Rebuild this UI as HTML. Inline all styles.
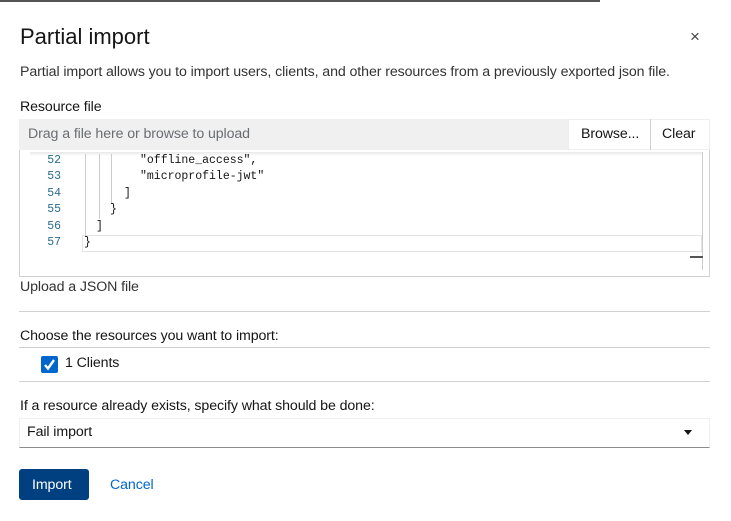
<!DOCTYPE html>
<html><head><style>
*{margin:0;padding:0;box-sizing:border-box}
body{width:731px;height:521px;background:#fff;font-family:"Liberation Sans",sans-serif;color:#151515;position:relative;overflow:hidden}
.a{position:absolute;white-space:nowrap}
.t{font-size:14.2px;letter-spacing:-0.1px}
.code{font-family:"Liberation Mono",monospace;font-size:11.5px;color:#151515}
.ln{font-family:"Liberation Mono",monospace;font-size:11.5px;color:#2a6e8f;width:30px;text-align:right;left:31px}
.hr{position:absolute;left:19px;width:691px;height:1px;background:#d2d2d2}
</style></head><body>
<div class="a" style="left:0;top:0;width:600px;height:2px;background:#555"></div>
<div class="a" style="left:20px;top:24px;font-size:22px">Partial import</div>
<div class="a" style="left:690px;top:27px;font-size:17px;color:#444">×</div>
<div class="a t" style="left:20px;top:64px;color:#333">Partial import allows you to import users, clients, and other resources from a previously exported json file.</div>
<div class="a t" style="left:20px;top:99px">Resource file</div>
<div class="a" style="left:19px;top:119px;width:691px;height:31px;background:#f0f0f0"></div>
<div class="a t" style="left:28px;top:126px;color:#6a6e73">Drag a file here or browse to upload</div>
<div class="a" style="left:568px;top:119px;width:142px;height:31px;background:#fff;border:1px solid #eee"></div>
<div class="a" style="left:650px;top:119px;width:1px;height:31px;background:#d2d2d2"></div>
<div class="a t" style="left:581px;top:126px">Browse...</div>
<div class="a t" style="left:662px;top:126px">Clear</div>
<div class="a" style="left:19px;top:150px;width:691px;height:127px;border:1px solid #d2d2d2;border-top:none"></div>
<div class="a" style="left:30px;top:152px;width:672px;height:4px;background:linear-gradient(#e8e8e8,#fff)"></div>
<div class="a" style="left:82px;top:235px;width:620px;height:17px;border:1px solid #e4e4e4"></div>
<div class="a" style="left:702px;top:152px;width:1px;height:118px;background:#ccc"></div>
<div class="a" style="left:690px;top:256px;width:13px;height:2px;background:#555"></div>
<div class="a" style="left:85px;top:154px;width:1px;height:82px;background:#ccc"></div>
<div class="a" style="left:99px;top:154px;width:1px;height:65px;background:#ccc"></div>
<div class="a" style="left:111px;top:154px;width:1px;height:49px;background:#ccc"></div>
<div class="a ln" style="top:154px">52</div><div class="a code" style="left:140px;top:154px">"offline_access",</div>
<div class="a ln" style="top:170px">53</div><div class="a code" style="left:140px;top:170px">"microprofile-jwt"</div>
<div class="a ln" style="top:187px">54</div><div class="a code" style="left:124px;top:187px">]</div>
<div class="a ln" style="top:203px">55</div><div class="a code" style="left:110px;top:203px">}</div>
<div class="a ln" style="top:220px">56</div><div class="a code" style="left:96px;top:220px">]</div>
<div class="a ln" style="top:236px">57</div><div class="a code" style="left:84px;top:236px">}</div>
<div class="a t" style="left:20px;top:279px;color:#333">Upload a JSON file</div>
<div class="hr" style="top:311px"></div>
<div class="a t" style="left:20px;top:328px">Choose the resources you want to import:</div>
<div class="hr" style="top:347px"></div>
<div class="a" style="left:41px;top:356px;width:17px;height:17px;background:#06c;border-radius:2px"><svg width="17" height="17"><path d="M4 9l3 3.5L13 4" stroke="#fff" stroke-width="2.4" fill="none"/></svg></div>
<div class="a t" style="left:65px;top:355px">1 Clients</div>
<div class="hr" style="top:381px"></div>
<div class="a t" style="left:20px;top:398px">If a resource already exists, specify what should be done:</div>
<div class="a" style="left:19px;top:418px;width:691px;height:30px;border:1px solid #eee;border-bottom:1px solid #8a8d90"></div>
<div class="a t" style="left:27px;top:424px">Fail import</div>
<div class="a" style="left:684px;top:430px;width:0;height:0;border-left:4.5px solid transparent;border-right:4.5px solid transparent;border-top:5px solid #151515"></div>
<div class="a" style="left:19px;top:469px;width:70px;height:31px;background:#004080;border-radius:3px"></div>
<div class="a t" style="left:32px;top:477px;color:#fff">Import</div>
<div class="a t" style="left:110px;top:477px;color:#06c">Cancel</div>
</body></html>
